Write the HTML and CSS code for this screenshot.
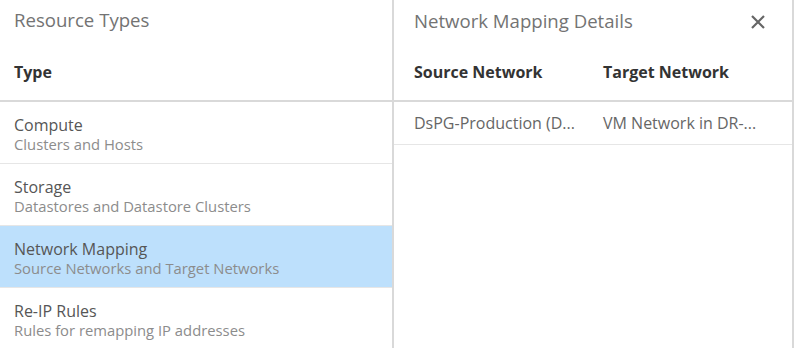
FILE: index.html
```html
<!DOCTYPE html>
<html lang="en">
<head>
    <meta charset="UTF-8">
    <title>Resource Mappings</title>
    <link rel="stylesheet" href="styles.css">
</head>
<body>
    <div class="layout">
        <div class="panel types-panel">
            <div class="panel-title">Resource Types</div>
            <div class="col-header">
                <span>Type</span>
            </div>
            <div class="type-row">
                <div class="type-name">Compute</div>
                <div class="type-desc">Clusters and Hosts</div>
            </div>
            <div class="type-row">
                <div class="type-name">Storage</div>
                <div class="type-desc">Datastores and Datastore Clusters</div>
            </div>
            <div class="type-row selected">
                <div class="type-name">Network Mapping</div>
                <div class="type-desc">Source Networks and Target Networks</div>
            </div>
            <div class="type-row">
                <div class="type-name">Re-IP Rules</div>
                <div class="type-desc">Rules for remapping IP addresses</div>
            </div>
        </div>

        <div class="panel details-panel">
            <div class="panel-title details-title">
                <span>Network Mapping Details</span>
                <button class="close-btn" aria-label="Close">
                    <svg width="14" height="14" viewBox="0 0 14 14">
                        <path d="M1 1 L13 13 M13 1 L1 13" stroke="#666" stroke-width="2.2" fill="none"/>
                    </svg>
                </button>
            </div>
            <div class="col-header grid">
                <span>Source Network</span>
                <span>Target Network</span>
            </div>
            <div class="detail-row grid">
                <span>DsPG-Production (D...</span>
                <span>VM Network in DR-...</span>
            </div>
        </div>
    </div>
</body>
</html>
```

FILE: styles.css
```css
* {
    margin: 0;
    padding: 0;
    box-sizing: border-box;
}

body {
    font-family: 'Open Sans', 'Liberation Sans', sans-serif;
    background: #fff;
    color: #565656;
    height: 348px;
    overflow: hidden;
}

.layout {
    display: flex;
    height: 348px;
}

.panel {
    border-right: 2px solid #d9d9d9;
    height: 100%;
}

.types-panel {
    width: 394px;
}

.details-panel {
    width: 400px;
}

.panel-title {
    height: 42px;
    line-height: 40px;
    font-size: 18.6px;
    color: #737373;
    padding-left: 14px;
}

.details-title {
    display: flex;
    align-items: center;
    justify-content: space-between;
    padding-left: 20px;
    padding-right: 27px;
}

.close-btn {
    border: none;
    background: none;
    display: flex;
    cursor: pointer;
    margin-top: 1px;
}

.col-header {
    height: 60px;
    padding: 0 14px;
    display: flex;
    align-items: center;
    font-size: 16px;
    font-weight: 700;
    color: #333;
    border-bottom: 2px solid #d9d9d9;
    padding-top: 2px;
}

.grid {
    display: grid;
    grid-template-columns: 189px 1fr;
    padding-left: 20px;
}

.type-row {
    height: 62px;
    padding: 14px 14px 0;
    border-bottom: 1px solid #e6e6e6;
}

.type-row:last-child {
    border-bottom: none;
}

.type-row.selected {
    background: #bde0fc;
}

.type-name {
    font-size: 16px;
    line-height: 19px;
    color: #565656;
}

.type-desc {
    font-size: 14.8px;
    line-height: 19px;
    color: #8c8c8c;
}

.detail-row {
    height: 43px;
    align-items: center;
    font-size: 16px;
    color: #666;
    border-bottom: 1px solid #e6e6e6;
}
```
